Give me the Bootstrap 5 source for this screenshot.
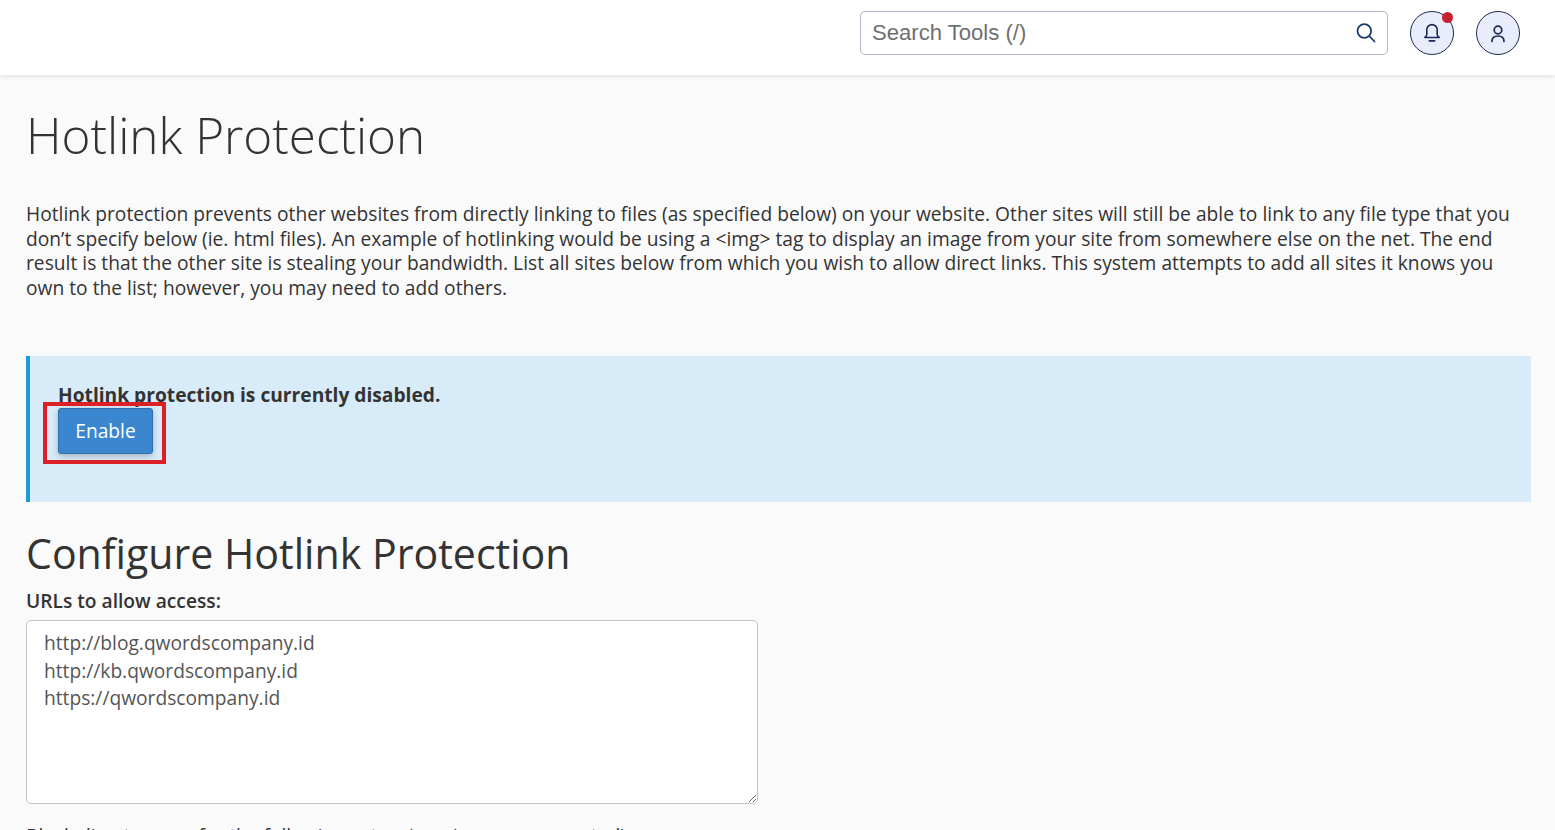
<!DOCTYPE html>
<html lang="en">
<head>
<meta charset="utf-8">
<title>Hotlink Protection</title>
<link href="https://cdn.jsdelivr.net/npm/bootstrap@5.3.0/dist/css/bootstrap.min.css" rel="stylesheet">
<style>
html,body{height:830px;overflow:hidden}
body{background:#fafafa;font-family:"Open Sans",sans-serif;color:#333;font-size:19.2px;line-height:24.6px}
.topbar{height:75px;background:#fff;box-shadow:0 1px 5px rgba(0,0,0,.12);padding:11px 35px 0 0;position:relative}
.searchbox{width:528px;height:44px;border:1px solid #b3b8c6;border-radius:5px;background:#fff;padding:0 11px}
.searchbox input{border:0;outline:0;flex:1;font:22.1px/1 "Liberation Sans",sans-serif;background:transparent;color:#333;padding:0}
.searchbox input::placeholder{color:#6f6f6f;opacity:1}
.roundbtn{width:44px;height:44px;border-radius:50%;border:1px solid #1b2a52;background:#e9edfb;position:relative;padding:0}
.reddot{position:absolute;top:0;right:0;width:11px;height:11px;border-radius:50%;background:#c8202f}
.pagebody{padding:0 24px 0 26px}
.pagetitle{font-weight:300;font-size:49.4px;line-height:60px;margin:30px 0 0;color:#333}
.intro{margin:37px 0 0;letter-spacing:.02px}
.notice{margin-top:56px;height:146px;background:#d8ebf9;border-left:4px solid #1b9ad6;padding:26px 28px}
.notice strong{font-weight:700;display:block;line-height:26px}
.enablebtn{display:block;width:95px;height:46px;background:#3a87d0;border:1px solid #2d6faf;border-radius:3px;color:#fff;font-size:19.2px;line-height:24px;padding:0;box-shadow:0 2px 6px rgba(0,0,0,.25)}
.btnmark{position:absolute;left:43px;top:402px;width:123px;height:62px;border:4px solid #dd1f26;pointer-events:none}
.sectiontitle{font-size:41.1px;font-weight:400;line-height:48px;margin:27px 0 0;color:#333}
.fieldlabel{display:block;font-weight:600;margin:11px 0 7px;line-height:25px}
.urlbox{display:block;width:732px;height:184px;border:1px solid #c4c4c4;border-radius:5px;background:#fff;color:#555;padding:8px 17px;font:19.2px/27.3px "Open Sans",sans-serif;outline:0}
.cuttext{margin:20px 0 0}
</style>
</head>
<body>
<header class="topbar d-flex justify-content-end align-items-start">
  <div class="searchbox d-flex align-items-center">
    <input type="text" placeholder="Search Tools (/)" aria-label="Search Tools">
    <svg width="20" height="20" viewBox="0 0 20 20" fill="none" stroke="#1b3a6b" stroke-width="1.800" stroke-linecap="round"><circle cx="8.300" cy="8" r="6.800"/><path d="M13.700 13.500l4.800 5"/></svg>
  </div>
  <button class="roundbtn d-flex align-items-center justify-content-center" type="button" aria-label="Notifications" style="margin-left:22px">
    <svg width="18" height="20" viewBox="0 0 18 20" fill="none" stroke="#1b2a52" stroke-width="1.6" stroke-linecap="round" stroke-linejoin="round"><path d="M1.800 14.500c1.400-1 2-1.600 2-3V6.800a5.200 5.200 0 0 1 10.400 0v4.700c0 1.400.6 2 2 3z"/><path d="M6.300 17.900h5.400"/></svg>
    <span class="reddot"></span>
  </button>
  <button class="roundbtn d-flex align-items-center justify-content-center" type="button" aria-label="Account" style="margin-left:22px">
    <svg width="16" height="20" viewBox="0 0 16 20" fill="none" stroke="#1b2a52" stroke-width="1.700" stroke-linecap="round"><circle cx="8" cy="7" r="3.800"/><path d="M2 18.500c0-3.500 2.500-5.500 6-5.500s6 2 6 5.500"/></svg>
  </button>
</header>
<main class="pagebody">
  <h1 class="pagetitle">Hotlink Protection</h1>
  <p class="intro">Hotlink protection prevents other websites from directly linking to files (as specified below) on your website. Other sites will still be able to link to any file type that you don’t specify below (ie. html files). An example of hotlinking would be using a &lt;img&gt; tag to display an image from your site from somewhere else on the net. The end result is that the other site is stealing your bandwidth. List all sites below from which you wish to allow direct links. This system attempts to add all sites it knows you own to the list; however, you may need to add others.</p>
  <div class="notice">
    <strong>Hotlink protection is currently disabled.</strong>
    <button class="btn enablebtn" type="button">Enable</button>
  </div>
  <h2 class="sectiontitle">Configure Hotlink Protection</h2>
  <label class="fieldlabel" for="urls">URLs to allow access:</label>
  <textarea id="urls" class="urlbox">http://blog.qwordscompany.id
http://kb.qwordscompany.id
https://qwordscompany.id</textarea>
  <p class="cuttext">Block direct access for the following extensions (comma-separated):</p>
</main>
<div class="btnmark"></div>
</body>
</html>
